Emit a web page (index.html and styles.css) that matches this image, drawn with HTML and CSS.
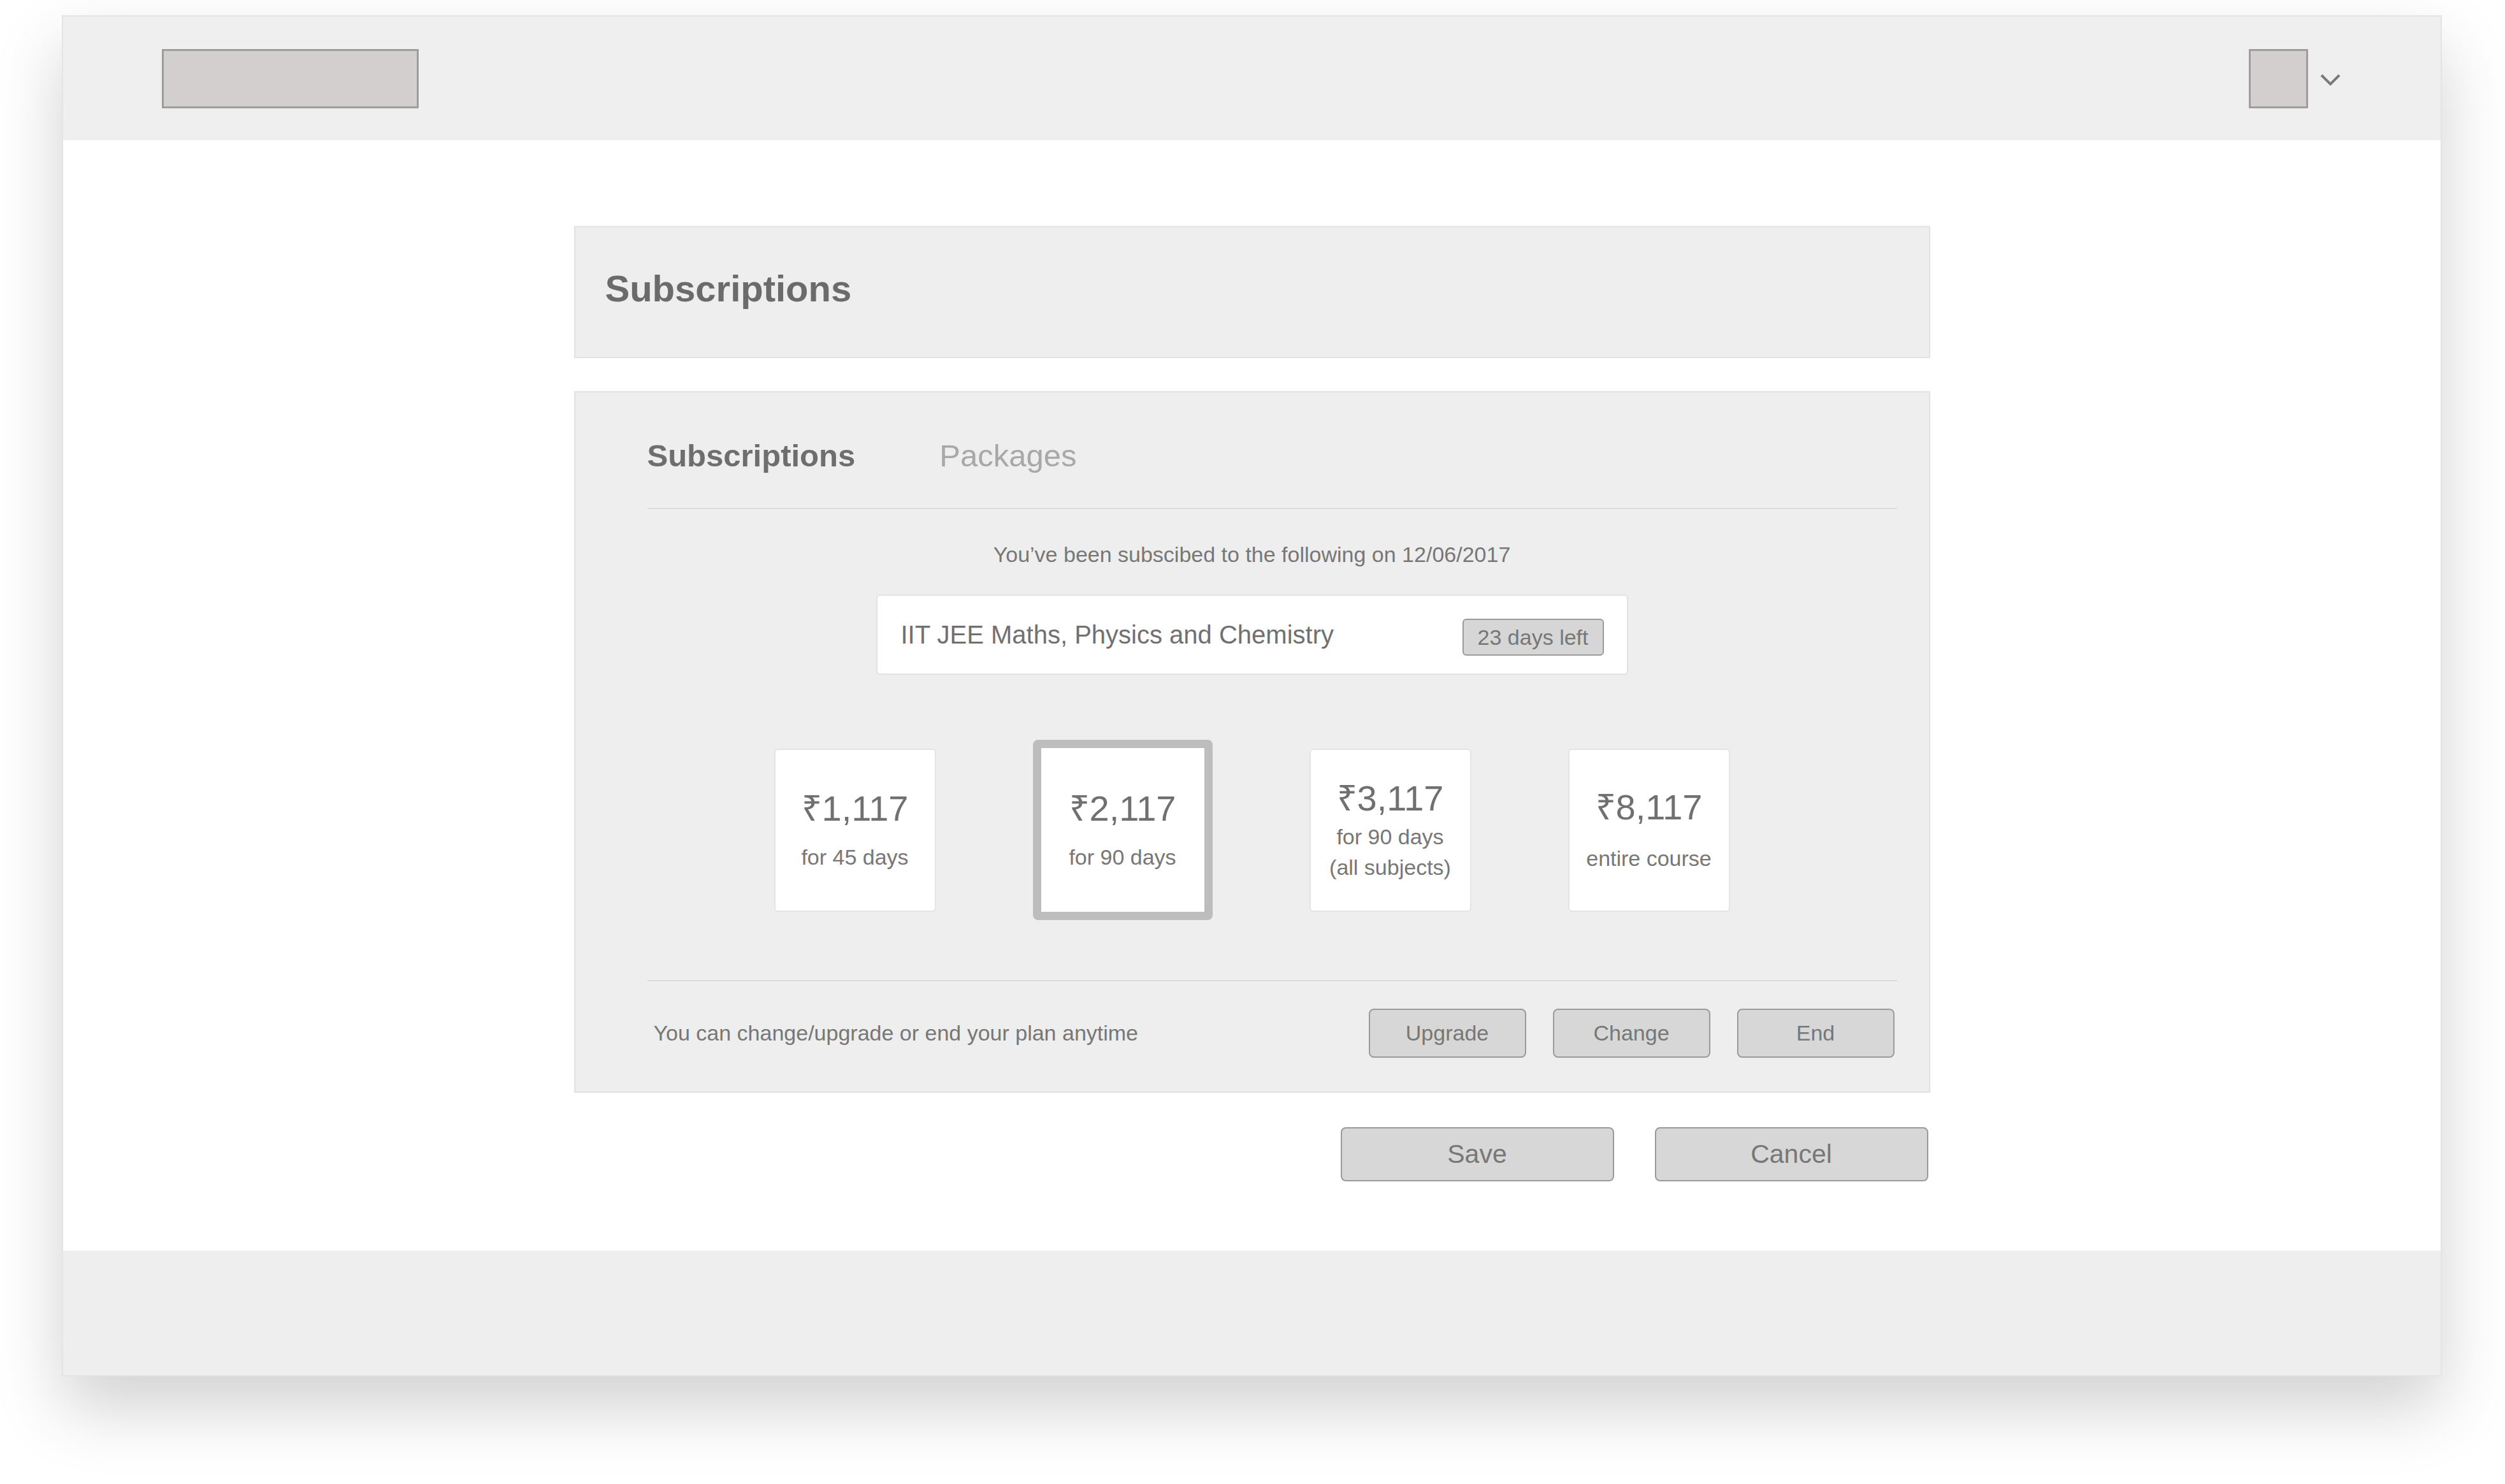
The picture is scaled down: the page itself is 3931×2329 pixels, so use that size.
FILE: index.html
```html
<!DOCTYPE html>
<html>
<head>
    <meta charset="utf-8">
    <title>Subscriptions</title>
    <link rel="stylesheet" href="styles.css">
</head>
<body>
    <div class="window">

        <header class="topbar">
            <div class="logo"></div>
            <div class="user">
                <div class="avatar"></div>
                <svg class="chevron" width="32" height="20" viewBox="0 0 32 20">
                    <polyline points="2,3 16,17 30,3" fill="none" stroke="#7a7a7a" stroke-width="4"/>
                </svg>
            </div>
        </header>

        <main class="content">
            <div class="wrap">
                <section class="title-card">
                    <h1>Subscriptions</h1>
                </section>

                <section class="panel">
                    <nav class="tabs">
                        <a class="tab active">Subscriptions</a>
                        <a class="tab">Packages</a>
                    </nav>

                    <p class="since">You’ve been subscibed to the following on 12/06/2017</p>

                    <div class="current">
                        <span class="current-name">IIT JEE Maths, Physics and Chemistry</span>
                        <span class="badge">23 days left</span>
                    </div>

                    <div class="plans">
                        <div class="plan">
                            <div class="plan-price">₹1,117</div>
                            <div class="plan-note">for 45 days</div>
                        </div>
                        <div class="plan selected">
                            <div class="plan-price">₹2,117</div>
                            <div class="plan-note">for 90 days</div>
                        </div>
                        <div class="plan multi">
                            <div class="plan-price">₹3,117</div>
                            <div class="plan-note">for 90 days<br>(all subjects)</div>
                        </div>
                        <div class="plan">
                            <div class="plan-price">₹8,117</div>
                            <div class="plan-note wide">entire course</div>
                        </div>
                    </div>

                    <div class="panel-foot">
                        <p>You can change/upgrade or end your plan anytime</p>
                        <div class="actions">
                            <button class="btn">Upgrade</button>
                            <button class="btn">Change</button>
                            <button class="btn">End</button>
                        </div>
                    </div>
                </section>

                <div class="form-actions">
                    <button class="btn btn-lg">Save</button>
                    <button class="btn btn-lg">Cancel</button>
                </div>
            </div>
        </main>

        <footer class="bottombar"></footer>
    </div>
</body>
</html>
```

FILE: styles.css
```css
* {
    margin: 0;
    padding: 0;
    box-sizing: border-box;
}

body {
    background: #fff;
    font-family: "Liberation Sans", Arial, sans-serif;
    color: #777;
    height: 2329px;
    overflow: hidden;
    padding: 24px 0 0 97px;
}

.window {
    width: 3735px;
    height: 2136px;
    border: 2px solid #e4e4e4;
    background: #fff;
    display: flex;
    flex-direction: column;
    box-shadow: 0 50px 100px rgba(0, 0, 0, 0.18);
}

/* top bar */
.topbar {
    height: 194px;
    background: #efefef;
    display: flex;
    align-items: center;
    justify-content: space-between;
    padding: 0 157px 0 155px;
}

.logo {
    width: 403px;
    height: 93px;
    border: 3px solid #9d9d9d;
    background: #d3cfce;
}

.user {
    display: flex;
    align-items: center;
    gap: 19px;
}

.avatar {
    width: 93px;
    height: 93px;
    border: 3px solid #9d9d9d;
    background: #d3cfce;
}

.chevron {
    display: block;
    margin-top: 4px;
}

/* main area */
.content {
    flex: 1;
}

.wrap {
    width: 2128px;
    margin: 135px auto 0;
}

.title-card {
    height: 207px;
    background: #eee;
    border: 2px solid #e2e2e2;
    box-shadow: 0 -1px 3px rgba(0, 0, 0, 0.05);
    padding: 61px 0 0 47px;
}

.title-card h1 {
    font-size: 58px;
    line-height: 70px;
    font-weight: bold;
    color: #6b6b6b;
}

.panel {
    margin-top: 52px;
    background: #eee;
    border: 2px solid #e2e2e2;
    box-shadow: 0 -1px 3px rgba(0, 0, 0, 0.05);
    padding-top: 69px;
}

.tabs {
    display: flex;
    gap: 132px;
    margin: 0 50px 0 113px;
    padding-bottom: 52px;
    border-bottom: 2px solid #dcdcdc;
}

.tab {
    font-size: 49px;
    line-height: 60px;
    color: #a8a8a8;
}

.tab.active {
    font-weight: bold;
    color: #6e6e6e;
}

.since {
    margin-top: 51px;
    text-align: center;
    font-size: 34px;
    line-height: 40px;
    color: #777;
}

.current {
    width: 1180px;
    height: 126px;
    margin: 43px auto 0;
    background: #fff;
    border: 2px solid #e2e2e2;
    border-radius: 6px;
    display: flex;
    align-items: center;
    justify-content: space-between;
    padding: 0 36px 0 37px;
}

.current-name {
    font-size: 40px;
    color: #707070;
}

.badge {
    height: 58px;
    line-height: 54px;
    padding: 0 22px;
    font-size: 34px;
    color: #777;
    background: #d6d6d6;
    border: 2px solid #9a9a9a;
    border-radius: 6px;
    margin-top: 8px;
}

/* plans */
.plans {
    margin-top: 102px;
    height: 283px;
    display: flex;
    justify-content: center;
    align-items: center;
    gap: 152px;
}

.plan {
    width: 254px;
    height: 256px;
    background: #fff;
    border: 2px solid #e4e4e4;
    border-radius: 6px;
    display: flex;
    flex-direction: column;
    align-items: center;
    justify-content: center;
    text-align: center;
}

.plan.selected {
    width: 282px;
    height: 283px;
    border: 13px solid #bdbdbd;
    border-radius: 8px;
}

.plan-price {
    font-size: 56px;
    line-height: 64px;
    color: #707070;
}

.plan-note {
    margin-top: 20px;
    font-size: 34px;
    line-height: 48px;
    color: #777;
}

.plan.multi .plan-note {
    margin-top: 4px;
}

.plan-note.wide {
    margin-top: 24px;
}

/* panel footer */
.panel-foot {
    margin: 94px 50px 0 113px;
    border-top: 2px solid #dcdcdc;
    padding: 43px 4px 53px 10px;
    display: flex;
    align-items: center;
    justify-content: space-between;
}

.panel-foot p {
    font-size: 34px;
    color: #777;
}

.actions {
    display: flex;
    gap: 42px;
}

.btn {
    width: 247px;
    height: 77px;
    background: #d7d7d7;
    border: 2px solid #9a9a9a;
    border-radius: 8px;
    font-family: "Liberation Sans", Arial, sans-serif;
    font-size: 34px;
    color: #777;
}

.form-actions {
    margin-top: 54px;
    padding-right: 3px;
    display: flex;
    justify-content: flex-end;
    gap: 64px;
}

.btn-lg {
    width: 429px;
    height: 85px;
    font-size: 41px;
}

.bottombar {
    height: 195px;
    background: #eee;
}
```
